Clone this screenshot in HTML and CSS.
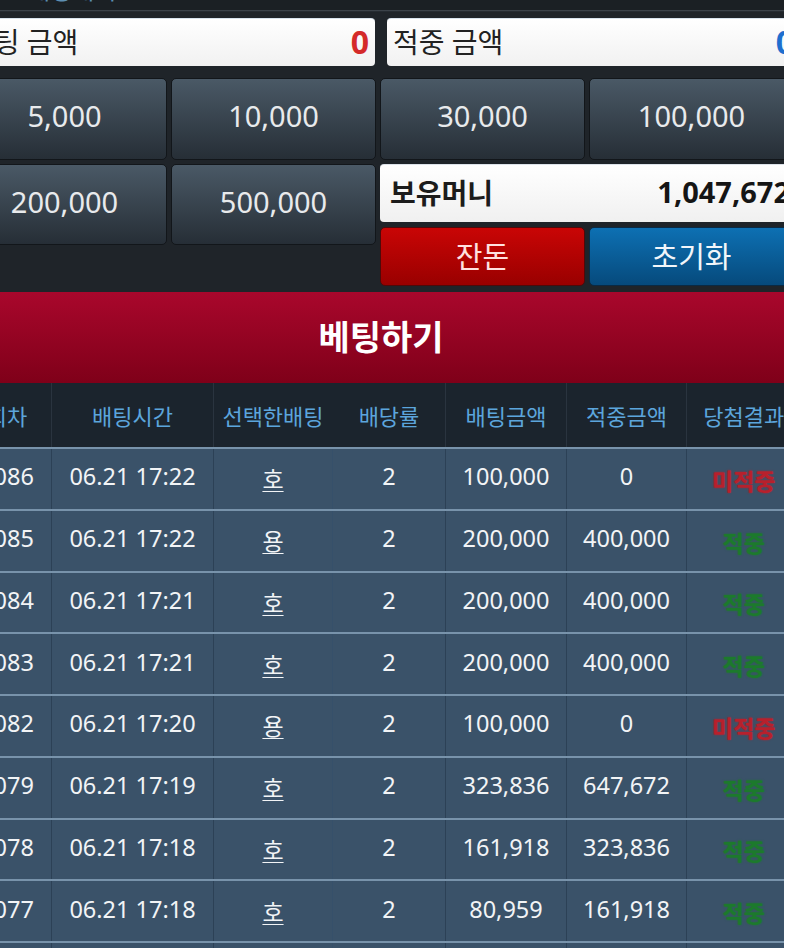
FILE: index.html
```html
<!DOCTYPE html>
<html lang="ko">
<head>
<meta charset="utf-8">
<title>베팅</title>
<link rel="stylesheet" href="styles.css">
</head>
<body>
<div class="screen">
  <div class="page">
    <div class="title"><div class="title-inner"><span class="title-dot"></span><span class="title-text">배팅내역</span></div></div>
    <div class="panel">
      <div class="fields">
        <div class="field"><span class="field-label">베팅 금액</span><span class="field-val red">0</span></div>
        <div class="field"><span class="field-label">적중 금액</span><span class="field-val blue">0</span></div>
      </div>
      <div class="chips">
        <button class="chip">5,000</button>
        <button class="chip">10,000</button>
        <button class="chip">30,000</button>
        <button class="chip">100,000</button>
        <button class="chip">200,000</button>
        <button class="chip">500,000</button>
        <div class="side">
          <div class="money"><span class="money-label">보유머니</span><span class="money-val">1,047,672</span></div>
          <button class="act act-red">잔돈</button>
          <button class="act act-blue">초기화</button>
        </div>
      </div>
    </div>
    <button class="bet">베팅하기</button>
    <table class="hist">
      <colgroup>
        <col class="c1"><col class="c2"><col class="c3"><col class="c4"><col class="c5"><col class="c6"><col class="c7">
      </colgroup>
      <thead>
        <tr><th>회차</th><th>배팅시간</th><th>선택한배팅</th><th>배당률</th><th>배팅금액</th><th>적중금액</th><th>당첨결과</th></tr>
      </thead>
      <tbody>
        <tr><td>1086</td><td>06.21 17:22</td><td><a class="pick">호</a></td><td>2</td><td>100,000</td><td>0</td><td><span class="res lose">미적중</span></td></tr>
        <tr><td>1085</td><td>06.21 17:22</td><td><a class="pick">용</a></td><td>2</td><td>200,000</td><td>400,000</td><td><span class="res win">적중</span></td></tr>
        <tr><td>1084</td><td>06.21 17:21</td><td><a class="pick">호</a></td><td>2</td><td>200,000</td><td>400,000</td><td><span class="res win">적중</span></td></tr>
        <tr><td>1083</td><td>06.21 17:21</td><td><a class="pick">호</a></td><td>2</td><td>200,000</td><td>400,000</td><td><span class="res win">적중</span></td></tr>
        <tr><td>1082</td><td>06.21 17:20</td><td><a class="pick">용</a></td><td>2</td><td>100,000</td><td>0</td><td><span class="res lose">미적중</span></td></tr>
        <tr><td>1079</td><td>06.21 17:19</td><td><a class="pick">호</a></td><td>2</td><td>323,836</td><td>647,672</td><td><span class="res win">적중</span></td></tr>
        <tr><td>1078</td><td>06.21 17:18</td><td><a class="pick">호</a></td><td>2</td><td>161,918</td><td>323,836</td><td><span class="res win">적중</span></td></tr>
        <tr><td>1077</td><td>06.21 17:18</td><td><a class="pick">호</a></td><td>2</td><td>80,959</td><td>161,918</td><td><span class="res win">적중</span></td></tr>
        <tr><td>1076</td><td>06.21 17:17</td><td><a class="pick">호</a></td><td>2</td><td>40,480</td><td>80,959</td><td><span class="res win">적중</span></td></tr>
      </tbody>
    </table>
  </div>
</div>
</body>
</html>
```

FILE: styles.css
```css
* { box-sizing: border-box; }
html, body { margin: 0; padding: 0; background: #ffffff; }
body { font-family: "Noto Sans", "Noto Sans CJK KR", sans-serif; }

.screen {
  width: 784px;
  height: 948px;
  overflow: hidden;
  background: #1f2429;
}
.page {
  width: 838px;
  margin-left: -38px;
}

.title {
  height: 11px;
  overflow: hidden;
  background: #1b2024;
  border-bottom: 1px solid #3b4249;
}
.title-inner {
  display: flex;
  align-items: center;
  gap: 10px;
  margin-top: -27px;
  padding-left: 40px;
  height: 34px;
}
.title-dot {
  width: 16px;
  height: 16px;
  border-radius: 50%;
  background: #3f7fa8;
}
.title-text {
  font-size: 24px;
  color: #5d8fb3;
  line-height: 1;
}

.panel {
  background: #1f2429;
  padding-top: 6px;
  border-top: 1px solid #262c32;
}
.fields {
  display: flex;
  gap: 12px;
}
.field {
  flex: 1;
  height: 48px;
  display: flex;
  align-items: center;
  justify-content: space-between;
  padding: 0 6px 3px 6px;
  background: linear-gradient(#ffffff, #f1f1f1);
  border-radius: 4px;
  border-top: 1px solid #d8e2ec;
}
.field-label {
  font-size: 28px;
  color: #222;
}
.field-val {
  font-size: 32px;
  font-weight: 700;
}
.red { color: #d42a2a; }
.blue { color: #1e6fcf; }

.chips {
  margin-top: 12px;
  display: grid;
  grid-template-columns: repeat(4, 205px);
  grid-template-rows: 82px 122px;
  gap: 4px;
}
.chip {
  font-family: inherit;
  font-size: 29px;
  color: #e8eaec;
  background: linear-gradient(#4a5966, #262e36);
  border: 1px solid #12161a;
  border-radius: 5px;
  padding: 0 0 7px 0;
  height: 82px;
}
.chips .chip:nth-child(5),
.chips .chip:nth-child(6) { height: 81px; }

.side {
  grid-column: 3 / 5;
  display: grid;
  grid-template-columns: 205px 205px;
  grid-template-rows: 58px 59px;
  gap: 5px 4px;
}
.money {
  grid-column: 1 / 3;
  width: 420px;
  display: flex;
  align-items: center;
  justify-content: space-between;
  padding: 0 10px 4px 10px;
  background: linear-gradient(#ffffff, #f0f0f0);
  border-radius: 4px;
  border-top: 1px solid #dde3ea;
}
.money-label {
  font-size: 28px;
  font-weight: 700;
  color: #1c1c1c;
}
.money-val {
  font-size: 29px;
  font-weight: 700;
  color: #151515;
}
.act {
  font-family: inherit;
  font-size: 29px;
  border-radius: 5px;
  padding: 0 0 3px 0;
}
.act-red {
  color: #ffe1e1;
  background: linear-gradient(#c90505, #990000);
  border: 1px solid #4e0a0a;
}
.act-blue {
  color: #f2f6fa;
  background: linear-gradient(#0d70b3, #064a7c);
  border: 1px solid #0a2a44;
}

.bet {
  display: block;
  width: 100%;
  height: 91px;
  margin-top: 6px;
  border: 0;
  padding: 0 0 4px 0;
  font-family: inherit;
  font-size: 34px;
  font-weight: 700;
  color: #ffffff;
  background: linear-gradient(#a9072c, #7f0019);
}

.hist {
  width: 838px;
  border-collapse: collapse;
  table-layout: fixed;
}
.c1 { width: 89px; }
.c2 { width: 162px; }
.c3 { width: 119px; }
.c4 { width: 113px; }
.c5 { width: 121px; }
.c6 { width: 120px; }
.c7 { width: 114px; }

.hist th {
  height: 65px;
  background: #1b242d;
  color: #5ca5dc;
  font-weight: 400;
  font-size: 22px;
  text-align: center;
  padding: 0;
  border-left: 1px solid #2a343f;
  white-space: nowrap;
  overflow: hidden;
}
.hist th:nth-child(4) { border-left-color: #1b242d; }
.hist td {
  height: 61.75px;
  background: #3a5269;
  color: #f2f4f6;
  font-size: 23.5px;
  text-align: center;
  padding: 0 0 5px 0;
  border-top: 2px solid #7893ab;
  border-left: 1px solid #2c4156;
  white-space: nowrap;
}
.hist td:nth-child(4) { border-left-color: #36506a; }
.pick {
  display: inline-block;
  padding-top: 4px;
  font-size: 23px;
  color: #f2f4f6;
  text-decoration: underline;
  text-decoration-thickness: 1px;
  text-underline-offset: 3px;
}
.res {
  display: inline-block;
  padding-top: 7px;
  font-size: 23px;
  font-weight: 700;
  text-shadow: 0 0 2px currentColor;
}
.lose { color: #b8202c; }
.win { color: #1c7a2c; }
```
